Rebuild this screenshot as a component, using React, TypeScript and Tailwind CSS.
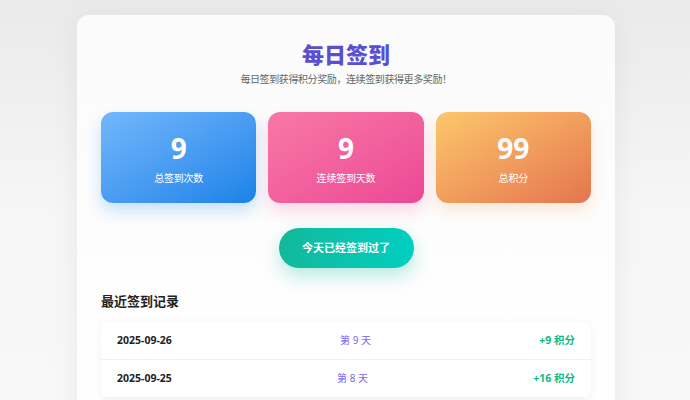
const stats = [
  { value: '9', label: '总签到次数', cls: 'bg-gradient-to-br from-[#72b7fc] to-[#1682e8] shadow-[0_8px_16px_rgba(40,140,240,0.25)]' },
  { value: '9', label: '连续签到天数', cls: 'bg-gradient-to-br from-[#f878a6] to-[#ec4795] shadow-[0_8px_16px_rgba(240,80,150,0.22)]' },
  { value: '99', label: '总积分', cls: 'bg-gradient-to-br from-[#fcc76c] to-[#e4744f] shadow-[0_8px_16px_rgba(240,160,80,0.22)]' },
];

const records = [
  { date: '2025-09-26', day: 9, points: 9 },
  { date: '2025-09-25', day: 8, points: 16 },
];

export default function App() {
  return (
    <div
      className="min-h-screen bg-gradient-to-b from-[#eaeaea] via-[#f6f6f6] to-[#f8f8f8] pt-[15px] pl-[2px]"
      style={{ fontFamily: '"Noto Sans", "Noto Sans CJK SC", sans-serif' }}
    >
      <div className="mx-auto w-[538px] rounded-xl bg-gradient-to-b from-[#fbfbfb] to-white px-6 pt-[23px] pb-6 shadow-[0_4px_30px_rgba(0,0,0,0.06)]">
        {/* Header */}
        <h1 className="text-center text-[22px] font-extrabold leading-8 text-[#5a4fcf]">每日签到</h1>
        <p className="mt-[2px] text-center text-[10px] leading-[14px] tracking-[-0.4px] text-[#666]">
          每日签到获得积分奖励，连续签到获得更多奖励！
        </p>

        {/* Stats */}
        <div className="mt-[26px] grid grid-cols-3 gap-3">
          {stats.map((s) => (
            <div
              key={s.label}
              className={`flex h-[91px] flex-col items-center justify-center rounded-xl text-white ${s.cls}`}
            >
              <div className="text-[28px] font-bold leading-9">{s.value}</div>
              <div className="mt-1 text-[10px] leading-4 tracking-[-0.2px]">{s.label}</div>
            </div>
          ))}
        </div>

        {/* Button */}
        <div className="mt-[25px] flex justify-center">
          <button
            type="button"
            className="h-10 w-[135px] rounded-full bg-gradient-to-r from-[#12b89a] to-[#00cfc1] text-[11px] font-bold text-white shadow-[0_8px_18px_rgba(20,190,160,0.3)]"
          >
            今天已经签到过了
          </button>
        </div>

        {/* Records */}
        <h2 className="mt-[23px] text-[13px] font-bold leading-5 text-[#222]">最近签到记录</h2>
        <div className="mt-[11px] overflow-hidden rounded-lg bg-white shadow-[0_2px_10px_rgba(0,0,0,0.06)]">
          {records.map((r) => (
            <div
              key={r.date}
              className="flex h-[38px] items-center justify-between border-b border-[#f1f1f1] px-4"
            >
              <span className="text-[10.5px] font-bold text-[#222]">{r.date}</span>
              <span className="text-[10px] text-[#7b67ec]">第 {r.day} 天</span>
              <span className="text-[10.5px] font-bold text-[#10b981]">+{r.points} 积分</span>
            </div>
          ))}
        </div>
      </div>
    </div>
  );
}
